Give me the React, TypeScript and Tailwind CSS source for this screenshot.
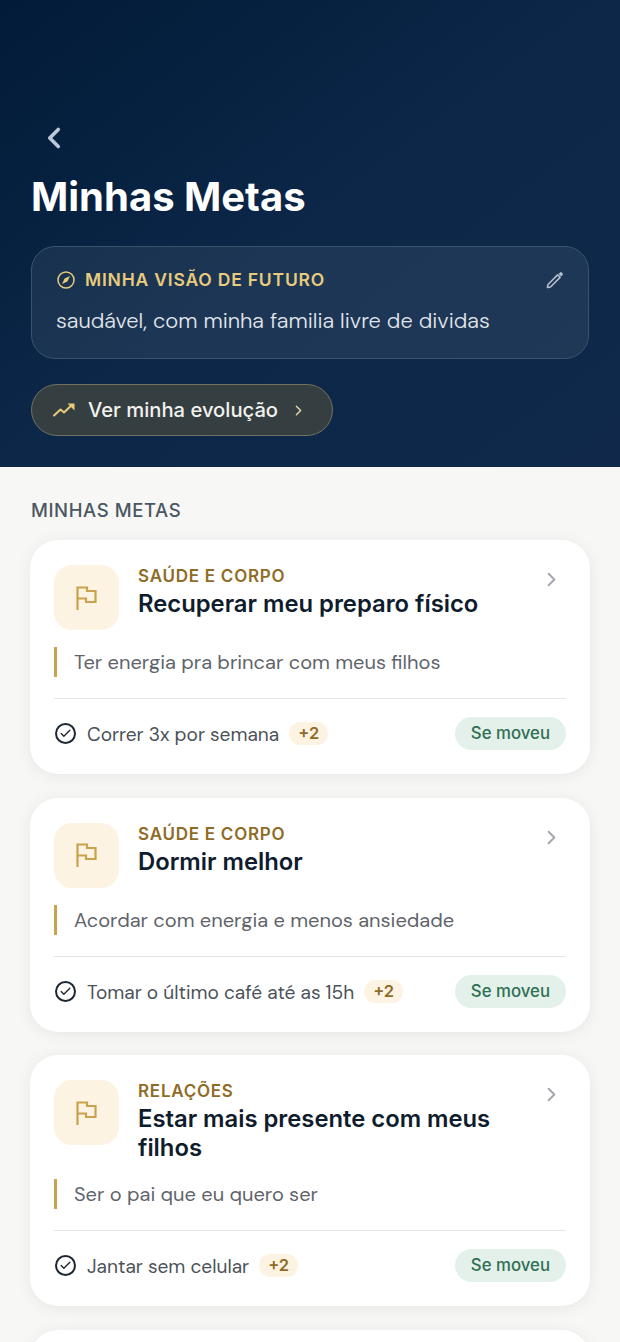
import { Check, ChevronLeft, ChevronRight } from 'lucide-react';

interface Goal {
  category: string;
  title: string;
  why: string;
  habit: string;
}

const goals: Goal[] = [
  {
    category: 'SAÚDE E CORPO',
    title: 'Recuperar meu preparo físico',
    why: 'Ter energia pra brincar com meus filhos',
    habit: 'Correr 3x por semana',
  },
  {
    category: 'SAÚDE E CORPO',
    title: 'Dormir melhor',
    why: 'Acordar com energia e menos ansiedade',
    habit: 'Tomar o último café até as 15h',
  },
  {
    category: 'RELAÇÕES',
    title: 'Estar mais presente com meus filhos',
    why: 'Ser o pai que eu quero ser',
    habit: 'Jantar sem celular',
  },
];

const FlagIcon = () => (
  <svg width="21" height="24" viewBox="0 0 21 24" fill="none" stroke="#c9a24d" strokeWidth="2.2" strokeLinejoin="miter">
    <path d="M1.5 24V1.5H11V5H19.5V16H10V12.5H1.5" />
  </svg>
);

const CompassIcon = () => (
  <svg width="18" height="18" viewBox="0 0 18 18" fill="none">
    <circle cx="9" cy="9" r="8" stroke="#e8cc7c" strokeWidth="1.5" />
    <path d="M13 5L10.4 10.4L5 13L7.6 7.6Z" fill="#e8cc7c" />
  </svg>
);

const PencilIcon = () => (
  <svg width="20" height="20" viewBox="0 0 20 20" fill="none">
    <path d="M3 14.5L12.6 4.9L15.1 7.4L5.5 17L2.4 17.6Z" stroke="#b4c0cf" strokeWidth="1.5" strokeLinejoin="round" />
    <path d="M13.6 3.9L15 2.5C15.5 2 16.3 2 16.8 2.5L17.5 3.2C18 3.7 18 4.5 17.5 5L16.1 6.4Z" fill="#b4c0cf" />
  </svg>
);

const TrendIcon = () => (
  <svg width="22" height="14" viewBox="0 0 22 14" fill="none">
    <path d="M1 12.5L7.5 6.5L11 9.5L18 2.8" stroke="#e8cc7c" strokeWidth="2" strokeLinejoin="round" strokeLinecap="round" />
    <path d="M14.5 0.5H21.5V7.5Z" fill="#e8cc7c" />
  </svg>
);

const GoalCard = ({ goal }: { goal: Goal }) => (
  <div className="rounded-[28px] bg-white px-[24px] pt-[25px] pb-[24px] shadow-[0_2px_16px_rgba(0,0,0,0.07)]">
    <div className="flex">
      <div className="flex h-[65px] w-[65px] shrink-0 items-center justify-center rounded-[18px] bg-[#fdf3e3]">
        <FlagIcon />
      </div>
      <div className="ml-[19px] min-w-0 flex-1">
        <div className="text-[17px] leading-[22px] font-semibold tracking-[0.75px] text-[#8f6c26]">{goal.category}</div>
        <div className="mt-[2px] text-[23.8px] leading-[29px] font-semibold text-[#0f1c2e]">{goal.title}</div>
      </div>
      <ChevronRight size={23} strokeWidth={2} className="mt-[3px] mr-[3px] shrink-0 text-[#a3a7ad]" />
    </div>
    <div className="mt-[17px] border-l-[3px] border-[#c9a24d] pl-[17px] font-['DM_Sans','Lato',sans-serif] text-[20.05px] leading-[30px] text-[#5f646b]">
      {goal.why}
    </div>
    <div className="mt-[21px] flex h-[52px] items-center border-t border-[#e4e5e6] pt-[18px]">
      <div className="ml-[1px] flex h-[21px] w-[21px] items-center justify-center rounded-full border-2 border-[#1c2733]">
        <Check size={13} strokeWidth={2.5} className="text-[#1c2733]" />
      </div>
      <span className="mt-[2px] ml-[11px] font-['DM_Sans','Lato',sans-serif] text-[19.1px] leading-[33px] text-[#4b5259]">{goal.habit}</span>
      <span className="ml-[10px] rounded-full bg-[#fdf3e3] px-[9px] text-[16.5px] leading-[23px] font-semibold text-[#8f6c26]">+2</span>
      <span className="ml-auto rounded-full bg-[#e3f1ea] px-[16px] text-[16.8px] leading-[33px] font-medium text-[#2f6f53]">Se moveu</span>
    </div>
  </div>
);

export default function App() {
  return (
    <div className="h-[1342px] w-[620px] overflow-hidden bg-[#f7f7f5] font-['Inter',sans-serif]">
      <header className="h-[467px] bg-gradient-to-br from-[#021b38] via-[#0c2748] to-[#10294a] px-[31px] pt-[121px]">
        <ChevronLeft size={34} strokeWidth={2.6} className="ml-[6px] text-[#bcc8d8]" />
        <h1 className="mt-[17px] text-[40px] leading-[50px] font-bold text-white">Minhas Metas</h1>
        <div className="mt-[24px] h-[113px] rounded-[24px] border border-[#3a5270] bg-white/[0.07] px-[24px] pt-[21px]">
          <div className="flex items-center">
            <span className="ml-[1px]">
              <CompassIcon />
            </span>
            <span className="ml-[10px] text-[17.5px] leading-[24px] font-semibold tracking-[0.8px] text-[#e8cc7c]">MINHA VISÃO DE FUTURO</span>
            <span className="mr-[-1px] ml-auto">
              <PencilIcon />
            </span>
          </div>
          <p className="mt-[14px] font-['DM_Sans','Lato',sans-serif] text-[21.9px] leading-[30px] font-light text-[#e2e7ec]">
            saudável, com minha familia livre de dividas
          </p>
        </div>
        <button className="mt-[25px] flex h-[52px] items-center rounded-full border border-[#70715f] bg-[#353e41] pr-[25px] pl-[21px]">
          <TrendIcon />
          <span className="ml-[13px] text-[20.2px] font-medium text-[#f2f2ee]">Ver minha evolução</span>
          <ChevronRight size={17} strokeWidth={2} className="ml-[12px] text-[#e8d9a8]" />
        </button>
      </header>
      <main className="px-[30px] pt-[31px]">
        <h2 className="pl-[1px] text-[18.5px] leading-[24px] font-medium tracking-[0.6px] text-[#4a5661]">MINHAS METAS</h2>
        <div className="mt-[18px] flex flex-col gap-[23.5px]">
          {goals.map((goal) => (
            <GoalCard key={goal.title} goal={goal} />
          ))}
          <div className="h-[60px] rounded-[28px] bg-white shadow-[0_2px_16px_rgba(0,0,0,0.07)]" />
        </div>
      </main>
    </div>
  );
}
